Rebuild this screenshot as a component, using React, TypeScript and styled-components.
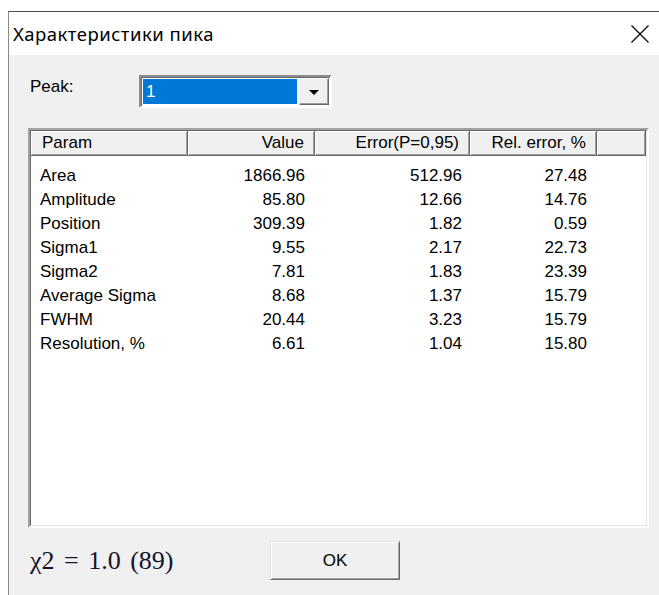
import styled, { createGlobalStyle } from 'styled-components'

const GlobalStyle = createGlobalStyle`
    html, body {
        margin: 0;
        padding: 0;
        background: #ffffff;
    }
    * {
        box-sizing: border-box;
    }
`

type PeakParam = {
    name: string
    value: string
    error: string
    relError: string
}

const params: PeakParam[] = [
    { name: 'Area', value: '1866.96', error: '512.96', relError: '27.48' },
    { name: 'Amplitude', value: '85.80', error: '12.66', relError: '14.76' },
    { name: 'Position', value: '309.39', error: '1.82', relError: '0.59' },
    { name: 'Sigma1', value: '9.55', error: '2.17', relError: '22.73' },
    { name: 'Sigma2', value: '7.81', error: '1.83', relError: '23.39' },
    { name: 'Average Sigma', value: '8.68', error: '1.37', relError: '15.79' },
    { name: 'FWHM', value: '20.44', error: '3.23', relError: '15.79' },
    { name: 'Resolution, %', value: '6.61', error: '1.04', relError: '15.80' },
]

const columns = '157px 127px 155px 127px 1fr'

const CloseIcon = () => (
    <svg width="20" height="20" viewBox="0 0 20 20">
        <path d="M1.5 1.5 L18.5 18.5 M18.5 1.5 L1.5 18.5" stroke="#111" strokeWidth="1.4" fill="none" />
    </svg>
)

export default function App() {
    return (
        <Page>
            <GlobalStyle />
            <Window>
                <TitleBar>
                    <Title>Характеристики пика</Title>
                    <Close>
                        <CloseIcon />
                    </Close>
                </TitleBar>
                <Client>
                    <PeakRow>
                        <Label>Peak:</Label>
                        <Combo>
                            <ComboField>1</ComboField>
                            <ComboButton>
                                <Arrow />
                            </ComboButton>
                        </Combo>
                    </PeakRow>
                    <ListFrame>
                        <ListInner>
                            <HeaderRow>
                                <HeaderCell>Param</HeaderCell>
                                <HeaderCell $right>Value</HeaderCell>
                                <HeaderCell $right>Error(P=0,95)</HeaderCell>
                                <HeaderCell $right>Rel. error, %</HeaderCell>
                                <HeaderCell />
                            </HeaderRow>
                            <Rows>
                                {params.map(p => (
                                    <Row key={p.name}>
                                        <Cell>{p.name}</Cell>
                                        <Cell $right>{p.value}</Cell>
                                        <Cell $right $pad={8}>
                                            {p.error}
                                        </Cell>
                                        <Cell $right>{p.relError}</Cell>
                                    </Row>
                                ))}
                            </Rows>
                        </ListInner>
                    </ListFrame>
                    <Footer>
                        <Chi>χ2 = 1.0 (89)</Chi>
                        <OkButton>OK</OkButton>
                    </Footer>
                </Client>
            </Window>
        </Page>
    )
}

const Page = styled.div`
    width: 659px;
    height: 595px;
    padding: 11px 0 0 8px;
    overflow: hidden;
`

const Window = styled.div`
    height: 100%;
    display: flex;
    flex-direction: column;
    border-top: 1px solid #46515f;
    border-left: 1px solid #8a8a8a;
    background: #f0f0f0;
`

const TitleBar = styled.div`
    height: 43px;
    flex-shrink: 0;
    display: flex;
    align-items: center;
    justify-content: space-between;
    padding: 0 8px 0 4px;
    background: #ffffff;
`

const Title = styled.div`
    font-family: 'Noto Sans', 'Open Sans', sans-serif;
    font-size: 18.5px;
    letter-spacing: 0.5px;
    color: #000;
    margin-top: -1px;
`

const Close = styled.div`
    display: flex;
    align-items: center;
    justify-content: center;
    width: 22px;
    height: 22px;
`

const Client = styled.div`
    flex: 1;
    display: flex;
    flex-direction: column;
    padding: 20px 10px 0 19px;
    font-family: 'Liberation Sans', Arial, sans-serif;
    font-size: 17px;
    color: #000;
`

const PeakRow = styled.div`
    display: flex;
    height: 33px;
`

const Label = styled.div`
    width: 111px;
    padding-left: 2px;
    line-height: 24px;
`

const Combo = styled.div`
    width: 193px;
    height: 33px;
    display: flex;
    padding: 1px;
    border: 2px solid;
    border-color: #8c8c8c #ffffff #ffffff #8c8c8c;
    box-shadow: inset 1px 1px #696969;
    background: #ffffff;
`

const ComboField = styled.div`
    flex: 1;
    margin: 1px 2px 1px 1px;
    background: #0078d7;
    color: #ffffff;
    padding-left: 3px;
    line-height: 25px;
`

const ComboButton = styled.div`
    width: 30px;
    display: flex;
    align-items: center;
    justify-content: center;
    background: #f0f0f0;
    border: 1px solid;
    border-color: #ffffff #696969 #696969 #ffffff;
    box-shadow: inset -1px -1px #a0a0a0;
`

const Arrow = styled.div`
    width: 0;
    height: 0;
    border-left: 5px solid transparent;
    border-right: 5px solid transparent;
    border-top: 5px solid #000;
    margin-top: 1px;
`

const ListFrame = styled.div`
    margin-top: 20px;
    height: 400px;
    border: 2px solid;
    border-color: #a0a0a0 #ffffff #ffffff #a0a0a0;
`

const ListInner = styled.div`
    height: 100%;
    display: flex;
    flex-direction: column;
    border: 1px solid;
    border-color: #696969 #e3e3e3 #e3e3e3 #696969;
    background: #ffffff;
`

const HeaderRow = styled.div`
    display: grid;
    grid-template-columns: ${columns};
    height: 25px;
    flex-shrink: 0;
`

const HeaderCell = styled.div<{ $right?: boolean }>`
    background: #f0f0f0;
    border-right: 1px solid #696969;
    border-bottom: 1px solid #696969;
    box-shadow: inset 1px 1px #ffffff, inset -1px -1px #a0a0a0;
    line-height: 23px;
    padding: 0 10px 0 11px;
    text-align: ${p => (p.$right ? 'right' : 'left')};
    white-space: nowrap;
    overflow: hidden;
`

const Rows = styled.div`
    padding-top: 8px;
`

const Row = styled.div`
    display: grid;
    grid-template-columns: ${columns};
    height: 24px;
    line-height: 24px;
`

const Cell = styled.div<{ $right?: boolean; $pad?: number }>`
    padding: 0 ${p => p.$pad ?? 10}px 0 9px;
    text-align: ${p => (p.$right ? 'right' : 'left')};
    white-space: nowrap;
`

const Footer = styled.div`
    margin-top: 13px;
    display: flex;
    align-items: center;
    height: 39px;
`

const Chi = styled.div`
    width: 242px;
    padding-left: 2px;
    font-family: 'Liberation Serif', 'Times New Roman', serif;
    font-size: 26px;
    word-spacing: 3px;
    color: #14142a;
`

const OkButton = styled.div`
    width: 130px;
    height: 39px;
    display: flex;
    align-items: center;
    justify-content: center;
    background: #f0f0f0;
    border: 1px solid;
    border-color: #e3e3e3 #696969 #696969 #e3e3e3;
    box-shadow: inset 1px 1px #ffffff, inset -1px -1px #a0a0a0;
`
